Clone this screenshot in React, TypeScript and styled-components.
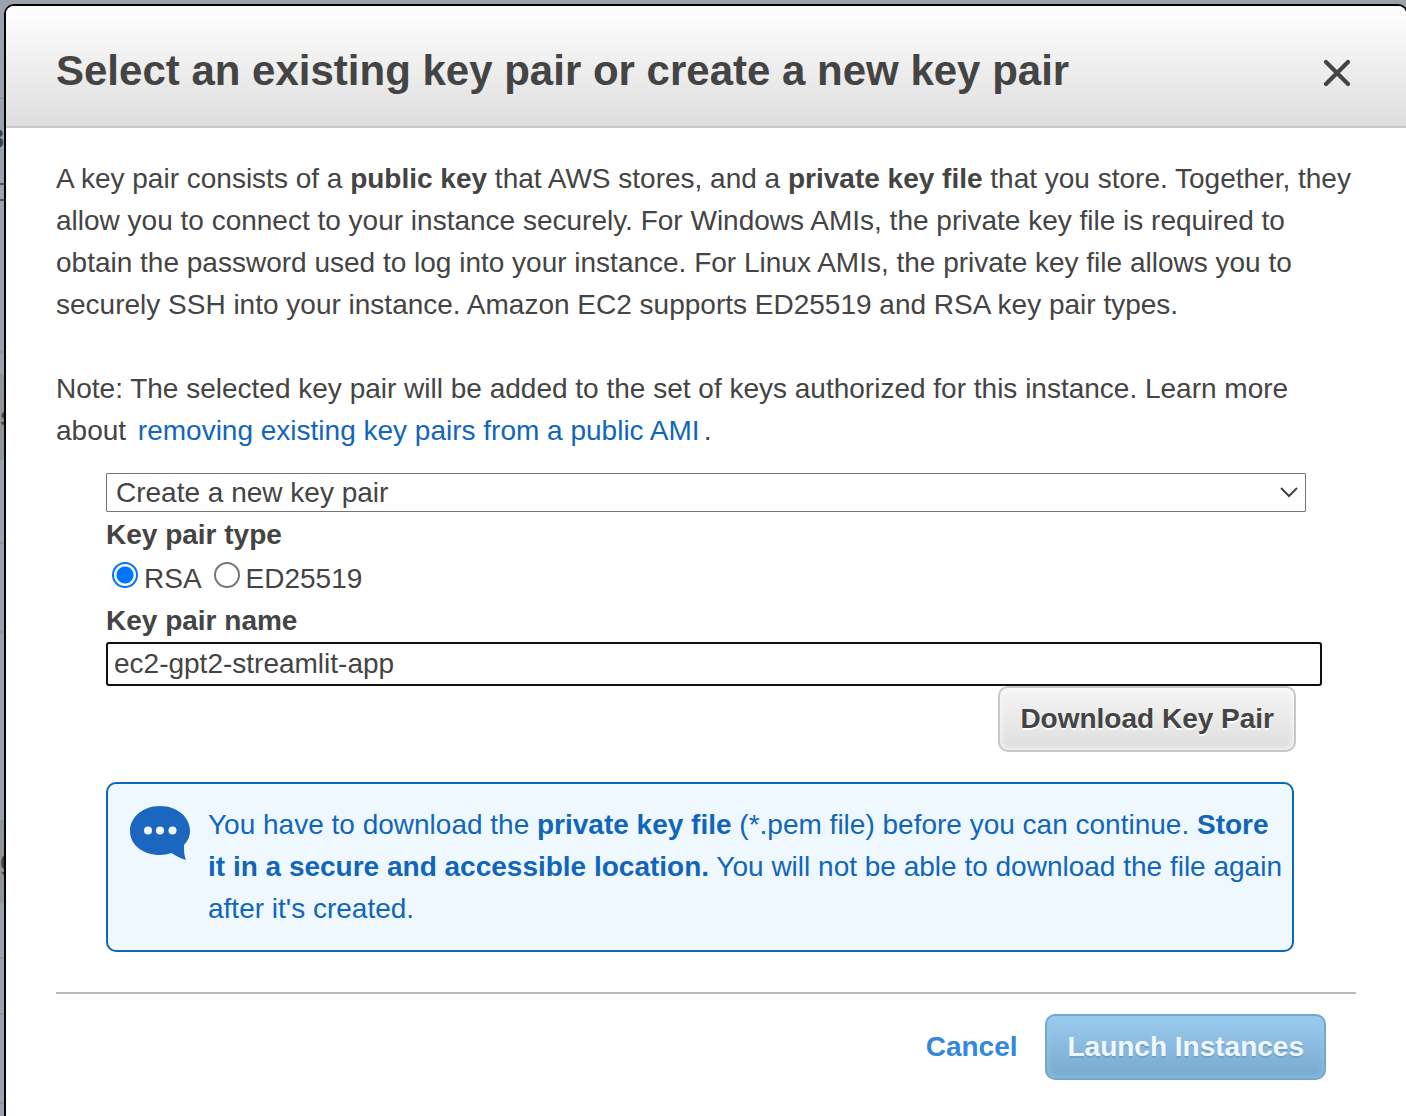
import React, { useState } from "react";
import styled, { createGlobalStyle } from "styled-components";

const GlobalStyle = createGlobalStyle`
  *, *::before, *::after { box-sizing: border-box; }
  html { background: #9ca2a9; }
  body {
    margin: 0;
    color: #444;
    font: 28px/42px "Liberation Sans", Arial, sans-serif;
    overflow: hidden;
  }
`;

const Page = styled.div`
  position: relative;
  min-height: 100vh;
  padding: 4px 0 0 4px;
  background: #9ca2a9;
  overflow: hidden;
`;

const Backdrop = styled.div`
  position: absolute;
  inset: 0 auto auto 0;
  width: 4px;
  overflow: hidden;
`;

const BackdropRow = styled.div<{ $height: number; $shade?: boolean; $open?: boolean; $end?: boolean }>`
  display: flex;
  align-items: center;
  justify-content: ${(p) => (p.$end ? "flex-end" : "flex-start")};
  height: ${(p) => p.$height}px;
  border-bottom: ${(p) => (p.$open ? "0" : "2px solid #90969d")};
  background: ${(p) => (p.$shade ? "#8f959b" : "transparent")};
  color: #3a424b;
  font-weight: bold;
`;

const BackdropField = styled.div`
  align-self: flex-start;
  width: 100%;
  height: 18px;
  margin-top: 4px;
  border: solid #4b535c;
  border-width: 2px 0;
`;

const Dialog = styled.section`
  min-height: calc(100vh - 4px);
  margin-right: -2px;
  position: relative;
  background: #fff;
  border: 2px solid #000;
  border-bottom: 0;
  border-radius: 10px 10px 0 0;
`;

const Header = styled.header`
  display: flex;
  align-items: center;
  justify-content: space-between;
  padding: 34px 50px 24px;
  border-bottom: 2px solid #c8c8c8;
  border-radius: 8px 8px 0 0;
  background: linear-gradient(#fff, #dedede);
`;

const Title = styled.h1`
  margin: 0;
  font-size: 42px;
  line-height: 62px;
`;

const CloseButton = styled.button`
  display: flex;
  padding: 0;
  margin: 4px 4px 0 0;
  border: 0;
  background: none;
  color: #444;
  cursor: pointer;
`;

const Content = styled.div`
  padding: 30px 50px 0;
`;

const Paragraph = styled.p`
  margin: 0 0 42px;
`;

const Note = styled(Paragraph)`
  margin-bottom: 21px;
`;

const TextLink = styled.a`
  margin: 0 4px;
  color: #1166bb;
  text-decoration: none;
`;

const Form = styled.form`
  display: flex;
  flex-direction: column;
  padding: 0 50px;
`;

const SelectWrap = styled.div`
  display: grid;
  align-items: center;
  margin-bottom: 2px;

  > * { grid-area: 1 / 1; }
  > svg { justify-self: end; margin-right: 8px; pointer-events: none; }
`;

const Select = styled.select`
  appearance: none;
  width: 100%;
  height: 39px;
  padding: 0 40px 0 9px;
  border: 1px solid #767676;
  border-radius: 1px;
  background: #fff;
  color: inherit;
  font: inherit;
  line-height: 37px;
`;

const FieldSet = styled.fieldset`
  margin: 0;
  padding: 0;
  border: 0;
`;

const Legend = styled.legend`
  padding: 0;
  font-weight: bold;
`;

const FieldLabel = styled.label`
  font-weight: bold;
`;

const RadioRow = styled.div`
  display: flex;
  gap: 12px;
  height: 44px;
  padding-left: 6px;
`;

const RadioLabel = styled.label`
  display: flex;
  align-items: flex-start;
  gap: 6px;
  line-height: 46px;
`;

const Radio = styled.input`
  appearance: none;
  width: 26px;
  height: 26px;
  margin: 6px 0 0;
  border: 2px solid #767676;
  border-radius: 50%;
  background: #fff;

  &:checked {
    border-color: #0075ff;
    background: radial-gradient(circle, #0075ff 7px, #0075ff 8px, #fff 9px);
  }
`;

const TextInput = styled.input`
  height: 44px;
  margin-right: -16px;
  padding: 0 6px;
  border: 2px solid #101010;
  border-radius: 3px;
  outline: 0;
  background: #fff;
  color: inherit;
  font: inherit;
`;

const Button = styled.button<{ $primary?: boolean }>`
  height: 66px;
  padding: 0 20px;
  border: 2px solid ${(p) => (p.$primary ? "#74a8cd" : "#c8c8c8")};
  border-radius: 10px;
  background: ${(p) =>
    p.$primary ? "linear-gradient(#9bccf0, #78a9cd)" : "linear-gradient(#f5f5f5, #dedede)"};
  box-shadow: inset 0 0 6px ${(p) => (p.$primary ? "#94c8ee" : "#fff")};
  color: ${(p) => (p.$primary ? "#f0f8ff" : "#444")};
  font: bold 28px/42px "Liberation Sans", Arial, sans-serif;
  text-shadow: 0 2px 0 ${(p) => (p.$primary ? "#70a2c6" : "#fff")};
  cursor: pointer;
`;

const DownloadButton = styled(Button)`
  align-self: flex-end;
  margin-right: 10px;
`;

const Notice = styled.div`
  display: flex;
  align-items: flex-start;
  gap: 18px;
  margin: 30px 12px 40px 0;
  padding: 20px 8px 20px 22px;
  border: 2px solid #0b68b3;
  border-radius: 10px;
  background: #f0f8ff;
  color: #1166bb;

  > svg { flex: none; margin-top: 2px; }
  > p { margin: 0; }
`;

const Footer = styled.footer`
  display: flex;
  align-items: center;
  justify-content: flex-end;
  gap: 28px;
  margin: 0 50px;
  padding: 20px 30px 36px 0;
  border-top: 2px solid #bbb;
`;

const CancelButton = styled.button`
  padding: 0;
  border: 0;
  background: none;
  color: #3388dd;
  font: bold 28px/42px "Liberation Sans", Arial, sans-serif;
  cursor: pointer;
`;

const CloseIcon = () => (
  <svg width="30" height="30" viewBox="0 0 30 30" aria-hidden="true">
    <path d="M4 4 26 26M26 4 4 26" stroke="currentColor" strokeWidth="4.200" strokeLinecap="round" />
  </svg>
);

const ChevronIcon = () => (
  <svg width="18" height="14" viewBox="0 0 18 14" aria-hidden="true">
    <path d="M1 2 9 10 17 2" fill="none" stroke="#444" strokeWidth="2" />
  </svg>
);

const SpeechIcon = () => (
  <svg width="60" height="55" viewBox="0 0 60 55" aria-hidden="true">
    <path
      d="M30 0C13 0 0 11 0 25s13 24 30 24c4 0 8-.7 11.500-2 5 3.500 9.500 5.500 14.500 7C54 50 54 45 54 39c4-4 6-9 6-14C60 11 47 0 30 0Z"
      fill="#1b66bf"
    />
    <circle cx="18" cy="24.500" r="4" fill="#f0f8ff" />
    <circle cx="30" cy="24.500" r="4" fill="#f0f8ff" />
    <circle cx="42.500" cy="24.500" r="4" fill="#f0f8ff" />
  </svg>
);

export default function App() {
  const [choice, setChoice] = useState("new");
  const [keyType, setKeyType] = useState("rsa");
  const [name, setName] = useState("ec2-gpt2-streamlit-app");

  return (
    <>
      <GlobalStyle />
      <Page>
        <Backdrop aria-hidden="true">
          <BackdropRow $height={99} />
          <BackdropRow $height={80} $open $end>
            3
          </BackdropRow>
          <BackdropRow $height={174}>
            <BackdropField />
          </BackdropRow>
          <BackdropRow $height={23} />
          <BackdropRow $height={84} $shade>
            s
          </BackdropRow>
          <BackdropRow $height={84} />
          <BackdropRow $height={89} />
          <BackdropRow $height={187} $open />
          <BackdropRow $height={83} $shade>
            g
          </BackdropRow>
          <BackdropRow $height={56} />
          <BackdropRow $height={56} />
          <BackdropRow $height={89} />
        </Backdrop>
        <Dialog role="dialog" aria-labelledby="dialog-title">
          <Header>
            <Title id="dialog-title">Select an existing key pair or create a new key pair</Title>
            <CloseButton type="button" aria-label="Close">
              <CloseIcon />
            </CloseButton>
          </Header>
          <Content>
            <Paragraph>
              A key pair consists of a <b>public key</b> that AWS stores, and a <b>private key file</b> that
              you store. Together, they allow you to connect to your instance securely. For Windows AMIs, the
              private key file is required to obtain the password used to log into your instance. For Linux
              AMIs, the private key file allows you to securely SSH into your instance. Amazon EC2 supports
              ED25519 and RSA key pair types.
            </Paragraph>
            <Note>
              Note: The selected key pair will be added to the set of keys authorized for this instance. Learn
              more about <TextLink href="#remove">removing existing key pairs from a public AMI</TextLink>.
            </Note>
            <Form onSubmit={(e) => e.preventDefault()}>
              <SelectWrap>
                <Select aria-label="Key pair" value={choice} onChange={(e) => setChoice(e.target.value)}>
                  <option value="new">Create a new key pair</option>
                </Select>
                <ChevronIcon />
              </SelectWrap>
              <FieldSet>
                <Legend>Key pair type</Legend>
                <RadioRow>
                  <RadioLabel>
                    <Radio
                      type="radio"
                      name="key-type"
                      checked={keyType === "rsa"}
                      onChange={() => setKeyType("rsa")}
                    />
                    RSA
                  </RadioLabel>
                  <RadioLabel>
                    <Radio
                      type="radio"
                      name="key-type"
                      checked={keyType === "ed25519"}
                      onChange={() => setKeyType("ed25519")}
                    />
                    ED25519
                  </RadioLabel>
                </RadioRow>
              </FieldSet>
              <FieldLabel htmlFor="key-name">Key pair name</FieldLabel>
              <TextInput id="key-name" type="text" value={name} onChange={(e) => setName(e.target.value)} />
              <DownloadButton type="button">Download Key Pair</DownloadButton>
              <Notice>
                <SpeechIcon />
                <p>
                  You have to download the <b>private key file</b> (*.pem file) before you can continue.{" "}
                  <b>Store it in a secure and accessible location.</b> You will not be able to download the
                  file again after it's created.
                </p>
              </Notice>
            </Form>
          </Content>
          <Footer>
            <CancelButton type="button">Cancel</CancelButton>
            <Button type="button" $primary>
              Launch Instances
            </Button>
          </Footer>
        </Dialog>
      </Page>
    </>
  );
}
